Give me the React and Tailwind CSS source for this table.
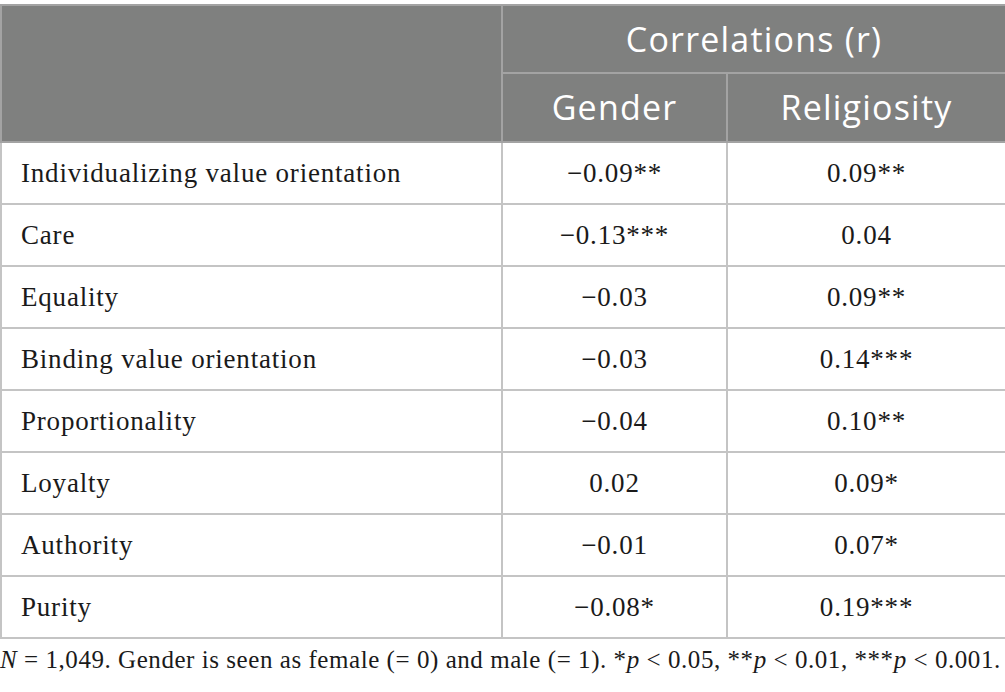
const rows = [
  ["Individualizing value orientation", "\u22120.09**", "0.09**"],
  ["Care", "\u22120.13***", "0.04"],
  ["Equality", "\u22120.03", "0.09**"],
  ["Binding value orientation", "\u22120.03", "0.14***"],
  ["Proportionality", "\u22120.04", "0.10**"],
  ["Loyalty", "0.02", "0.09*"],
  ["Authority", "\u22120.01", "0.07*"],
  ["Purity", "\u22120.08*", "0.19***"],
];

export default function App() {
  return (
    <div className="w-[1005px] h-[692px] bg-white pt-[4px]">
      <table className="w-[1005px] border-collapse table-fixed">
        <colgroup>
          <col className="w-[501px]" />
          <col className="w-[225px]" />
          <col className="w-[279px]" />
        </colgroup>
        <thead className="bg-[#7f807f] text-white font-['Open_Sans',sans-serif] text-[34px] tracking-[1.2px]">
          <tr className="h-[68px]">
            <th rowSpan={2} className="border-2 border-[#a3a3a3]"></th>
            <th colSpan={2} className="border-2 border-[#a3a3a3] font-normal text-center">
              Correlations (r)
            </th>
          </tr>
          <tr className="h-[69px]">
            <th className="border-2 border-[#a3a3a3] font-normal text-center">Gender</th>
            <th className="border-2 border-[#a3a3a3] font-normal text-center">Religiosity</th>
          </tr>
        </thead>
        <tbody className="font-['Liberation_Serif',serif] text-[27px] tracking-[0.8px] text-[#1a1a1a]">
          {rows.map(([label, gender, relig]) => (
            <tr key={label} className="h-[62px]">
              <td className="border-2 border-[#c4c4c4] pl-[19px]">{label}</td>
              <td className="border-2 border-[#c4c4c4] text-center">{gender}</td>
              <td className="border-2 border-[#c4c4c4] text-center">{relig}</td>
            </tr>
          ))}
        </tbody>
      </table>
      <p className="mt-[2px] font-['Liberation_Serif',serif] text-[25px] tracking-[0.55px] text-[#1a1a1a] whitespace-nowrap">
        <i>N</i> = 1,049. Gender is seen as female (= 0) and male (= 1). *<i>p</i> &lt; 0.05, **<i>p</i> &lt; 0.01, ***<i>p</i> &lt; 0.001.
      </p>
    </div>
  );
}
